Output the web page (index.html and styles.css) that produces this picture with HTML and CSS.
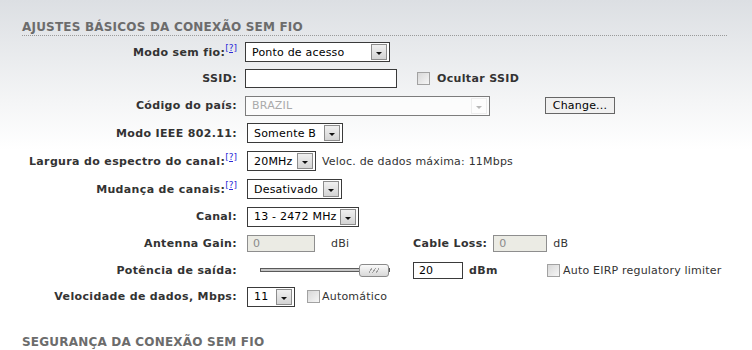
FILE: index.html
```html
<!DOCTYPE html>
<html>
<head>
    <meta charset="UTF-8">
    <title>Wireless</title>
    <link rel="stylesheet" href="styles.css">
</head>
<body>
    <h2 class="section">AJUSTES BÁSICOS DA CONEXÃO SEM FIO</h2>

    <div class="form">
        <!-- modo -->
        <label class="lbl">Modo sem fio:<sup><a href="#">[?]</a></sup></label>
        <div class="c2 wide">
            <span class="drop"><select class="sel-mode"><option>Ponto de acesso</option></select></span>
        </div>

        <!-- ssid -->
        <label class="lbl">SSID:</label>
        <div class="c2"><input type="text" class="txt ssid"></div>
        <div class="c3 span2">
            <input type="checkbox" class="chk hide-chk"><span class="strong">Ocultar SSID</span>
        </div>

        <!-- pais -->
        <label class="lbl">Código do país:</label>
        <div class="c2 span2">
            <span class="drop off"><select class="sel-country" disabled><option>BRAZIL</option></select></span>
        </div>
        <div class="c4"><button class="btn">Change...</button></div>

        <label class="lbl">Modo IEEE 802.11:</label>
        <div class="c2 wide in">
            <span class="drop"><select class="sel-ieee"><option>Somente B</option></select></span>
        </div>

        <label class="lbl">Largura do espectro do canal:<sup><a href="#">[?]</a></sup></label>
        <div class="c2 wide in">
            <span class="drop"><select class="sel-width"><option>20MHz</option></select></span>
            <span class="note">Veloc. de dados máxima: 11Mbps</span>
        </div>

        <label class="lbl">Mudança de canais:<sup><a href="#">[?]</a></sup></label>
        <div class="c2 wide in">
            <span class="drop"><select class="sel-shift"><option>Desativado</option></select></span>
        </div>

        <label class="lbl">Canal:</label>
        <div class="c2 wide in">
            <span class="drop"><select class="sel-chan"><option>13 - 2472 MHz</option></select></span>
        </div>

        <!-- ganho -->
        <label class="lbl">Antenna Gain:</label>
        <div class="c2 in">
            <input type="text" class="txt small" value="0" disabled><span class="unit">dBi</span>
        </div>
        <div class="c3 span2">
            <span class="strong">Cable Loss:</span>
            <input type="text" class="txt loss" value="0" disabled><span class="unit">dB</span>
        </div>

        <!-- potencia -->
        <label class="lbl">Potência de saída:</label>
        <div class="c2 in">
            <input type="range" class="slider" min="0" max="20" value="20">
        </div>
        <div class="c3">
            <input type="text" class="txt power" value="20"><span class="unit strong">dBm</span>
        </div>
        <div class="c4">
            <input type="checkbox" class="chk eirp-chk"><span>Auto EIRP regulatory limiter</span>
        </div>

        <label class="lbl">Velocidade de dados, Mbps:</label>
        <div class="c2 wide in">
            <span class="drop"><select class="sel-rate"><option>11</option></select></span>
            <input type="checkbox" class="chk auto-chk"><span>Automático</span>
        </div>
    </div>

    <h2 class="section second">SEGURANÇA DA CONEXÃO SEM FIO</h2>
</body>
</html>
```

FILE: styles.css
```css
body {
    margin: 0;
    min-height: 350px;
    font-family: 'DejaVu Sans', Verdana, sans-serif;
    font-size: 11px;
    letter-spacing: 0.2px;
    color: #333;
    background: linear-gradient(to bottom, #dcdfe3 0, #f4f5f6 100px, #fff 150px);
}

.section {
    margin: 20px 25px 0 22px;
    padding-bottom: 1px;
    font-size: 12px;
    line-height: 14px;
    font-weight: bold;
    letter-spacing: 0.2px;
    color: #6c6c6c;
    border-bottom: 1px dotted #9a9a9a;
}

.section.second {
    margin-top: 25px;
}

.form {
    display: grid;
    grid-template-columns: 215px 160px 124px 1fr;
    grid-template-rows: 26px 27px 27px 28px 28px 28px 27px 27px 26px 27px;
    column-gap: 8px;
    margin: 3px 0 0 22px;
    align-items: center;
}

.lbl {
    grid-column: 1;
    text-align: right;
    font-weight: bold;
    letter-spacing: 0.35px;
    white-space: nowrap;
}

.lbl sup {
    font-size: 9px;
    font-weight: normal;
    letter-spacing: 0;
    line-height: 0;
}

.lbl a {
    color: #2a2ad8;
}

.c2, .c3, .c4 {
    display: flex;
    align-items: center;
    white-space: nowrap;
}

.c2 { grid-column: 2; }
.c3 { grid-column: 3; }
.c4 { grid-column: 4; }

.c2.wide { grid-column: 2 / 5; }
.c2.span2 { grid-column: 2 / 4; }
.c3.span2 { grid-column: 3 / 5; }

.in {
    padding-left: 2px;
}

.strong {
    font-weight: bold;
    letter-spacing: 0.35px;
}

/* selects */
.drop {
    position: relative;
    display: inline-block;
    height: 20px;
}

.drop select {
    -webkit-appearance: none;
    appearance: none;
    height: 20px;
    margin: 0;
    padding: 0 0 0 6px;
    font-family: inherit;
    font-size: 11px;
    letter-spacing: 0.2px;
    color: #000;
    background: #fff;
    border: 1px solid #3a3a3a;
    border-radius: 0;
}

.drop::before {
    content: "";
    position: absolute;
    right: 3px;
    top: 2px;
    width: 14px;
    height: 14px;
    border: 1px solid #8c8c8c;
    background: linear-gradient(to bottom, #f0f0f0, #d4d4d4);
    pointer-events: none;
}

.drop::after {
    content: "";
    position: absolute;
    right: 8px;
    top: 10px;
    border-left: 3px solid transparent;
    border-right: 3px solid transparent;
    border-top: 3px solid #111;
    pointer-events: none;
}

.drop.off select {
    color: #8a8a8a;
    border-color: #4a4a4a;
}

.drop.off::before {
    border-color: #c4c4c4;
    background: #fafafa;
}

.drop.off::after {
    border-top-color: #b8b8b8;
}

.sel-mode { width: 145px; }
.sel-country { width: 245px; }
.sel-ieee { width: 96px; }
.sel-width { width: 69px; }
.sel-shift { width: 95px; }
.sel-chan { width: 112px; }
.sel-rate { width: 48px; }

.note {
    margin-left: 6px;
}

/* text fields */
.txt {
    box-sizing: border-box;
    height: 17px;
    margin: 0;
    padding: 0 0 0 5px;
    font-family: inherit;
    font-size: 11px;
    color: #000;
    border: 1px solid #3a3a3a;
    background: #fff;
}

.txt:disabled {
    color: #8a8a8a;
    background: #ebebe4;
    border-color: #8e8e8e;
}

.ssid {
    width: 152px;
    height: 19px;
}

.small { width: 68px; }
.loss { width: 54px; margin-left: 6px; }
.power { width: 50px; }

.unit {
    margin-left: 6px;
    align-self: flex-start;
    margin-top: 2px;
}

.c2 .unit { margin-left: 16px; }
.c3 .unit { margin-left: 6px; }

/* checkboxes */
.chk {
    -webkit-appearance: none;
    appearance: none;
    width: 13px;
    height: 13px;
    margin: 0;
    border: 1px solid #a2a2a2;
    background: linear-gradient(135deg, #d8d8d8, #f6f6f6);
}

.hide-chk { margin: 0 7px 0 4px; }
.eirp-chk { margin: 0 3px 0 2px; }
.auto-chk { margin: 0 2px 0 12px; }

.btn {
    height: 17px;
    width: 70px;
    padding: 0;
    font-family: inherit;
    font-size: 11px;
    letter-spacing: 0.2px;
    color: #000;
    background: #f0f0f0;
    border: 1px solid #666;
}

/* slider */
.slider {
    -webkit-appearance: none;
    appearance: none;
    width: 130px;
    height: 15px;
    margin: 0 0 0 13px;
    background: transparent;
}

.slider::-webkit-slider-runnable-track {
    height: 4px;
    background: #c6c6c6;
    border: 1px solid #5a5a5a;
}

.slider::-webkit-slider-thumb {
    -webkit-appearance: none;
    width: 30px;
    height: 13px;
    margin-top: -5px;
    border: 1px solid #8a8a8a;
    border-radius: 3px;
    background:
        repeating-linear-gradient(-55deg, transparent 0 2px, #a0a0a0 2px 3px) center / 10px 5px no-repeat,
        linear-gradient(to bottom, #fafafa, #d8d8d8);
}
```
